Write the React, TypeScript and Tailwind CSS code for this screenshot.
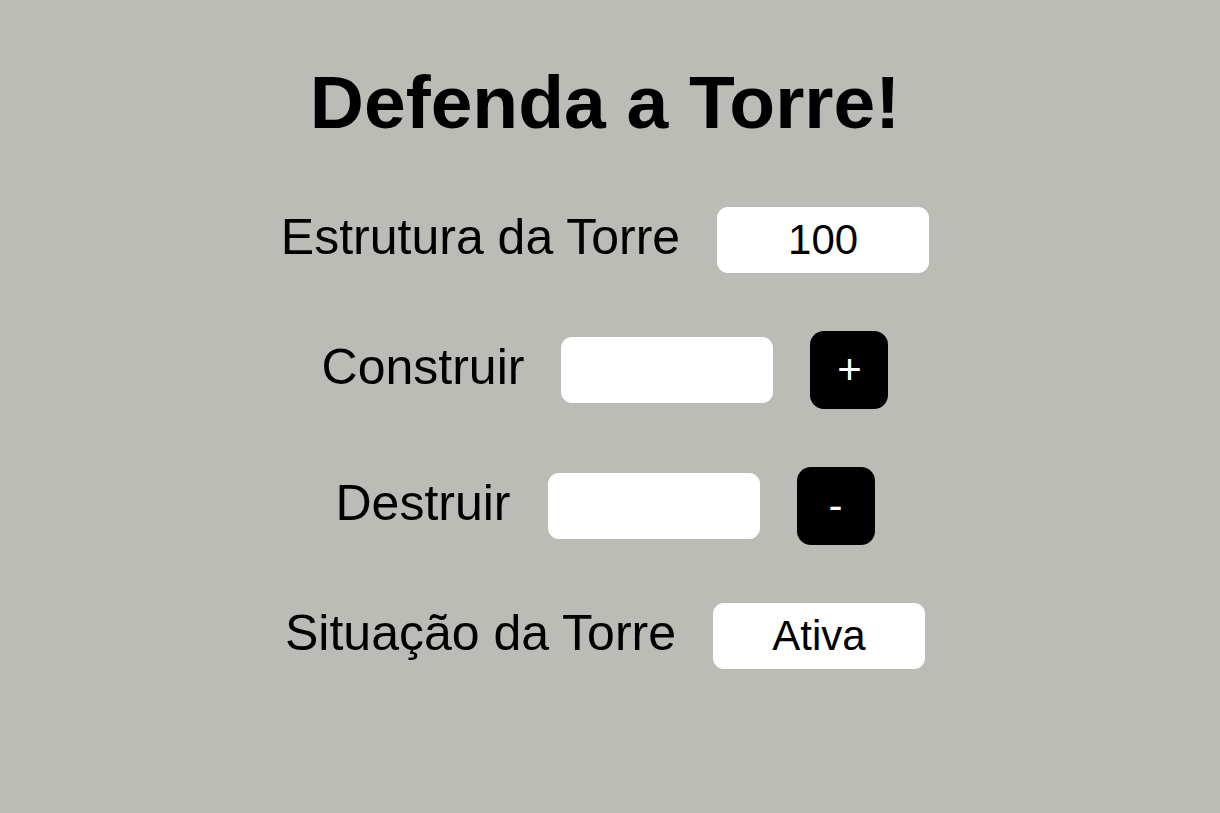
import React from "react";

function Label({ children }: { children: React.ReactNode }) {
  return (
    <span className="text-[50px] leading-[58px] pb-[6px] text-black whitespace-nowrap">
      {children}
    </span>
  );
}

function Box({ children }: { children?: React.ReactNode }) {
  return (
    <div className="w-[212px] h-[66px] bg-white rounded-[11px] flex items-center justify-center text-[42px] leading-[48px] text-black">
      {children}
    </div>
  );
}

function Btn({ children }: { children: React.ReactNode }) {
  return (
    <button className="w-[78px] h-[78px] bg-black text-white rounded-[14px] flex items-center justify-center text-[42px] leading-none">
      {children}
    </button>
  );
}

export default function App() {
  return (
    <div className="min-h-screen w-full bg-[#bbbcb6] pt-[59px] pr-[10px] flex flex-col items-center font-['Liberation_Sans',Arial,sans-serif] text-black">
      <h1 className="text-[75px] font-bold leading-[87px] whitespace-nowrap">Defenda a Torre!</h1>
      <div className="mt-[61px] flex flex-col items-center gap-[58px]">
        <div className="flex items-center gap-[37px]">
          <Label>Estrutura da Torre</Label>
          <Box>100</Box>
        </div>
        <div className="flex items-center gap-[37px]">
          <Label>Construir</Label>
          <input
            type="text"
            className="w-[212px] h-[66px] bg-white rounded-[11px] text-[42px] text-center outline-none border-0"
          />
          <Btn>+</Btn>
        </div>
        <div className="flex items-center gap-[37px]">
          <Label>Destruir</Label>
          <input
            type="text"
            className="w-[212px] h-[66px] bg-white rounded-[11px] text-[42px] text-center outline-none border-0"
          />
          <Btn>-</Btn>
        </div>
        <div className="flex items-center gap-[37px]">
          <Label>Situação da Torre</Label>
          <Box>Ativa</Box>
        </div>
      </div>
    </div>
  );
}
